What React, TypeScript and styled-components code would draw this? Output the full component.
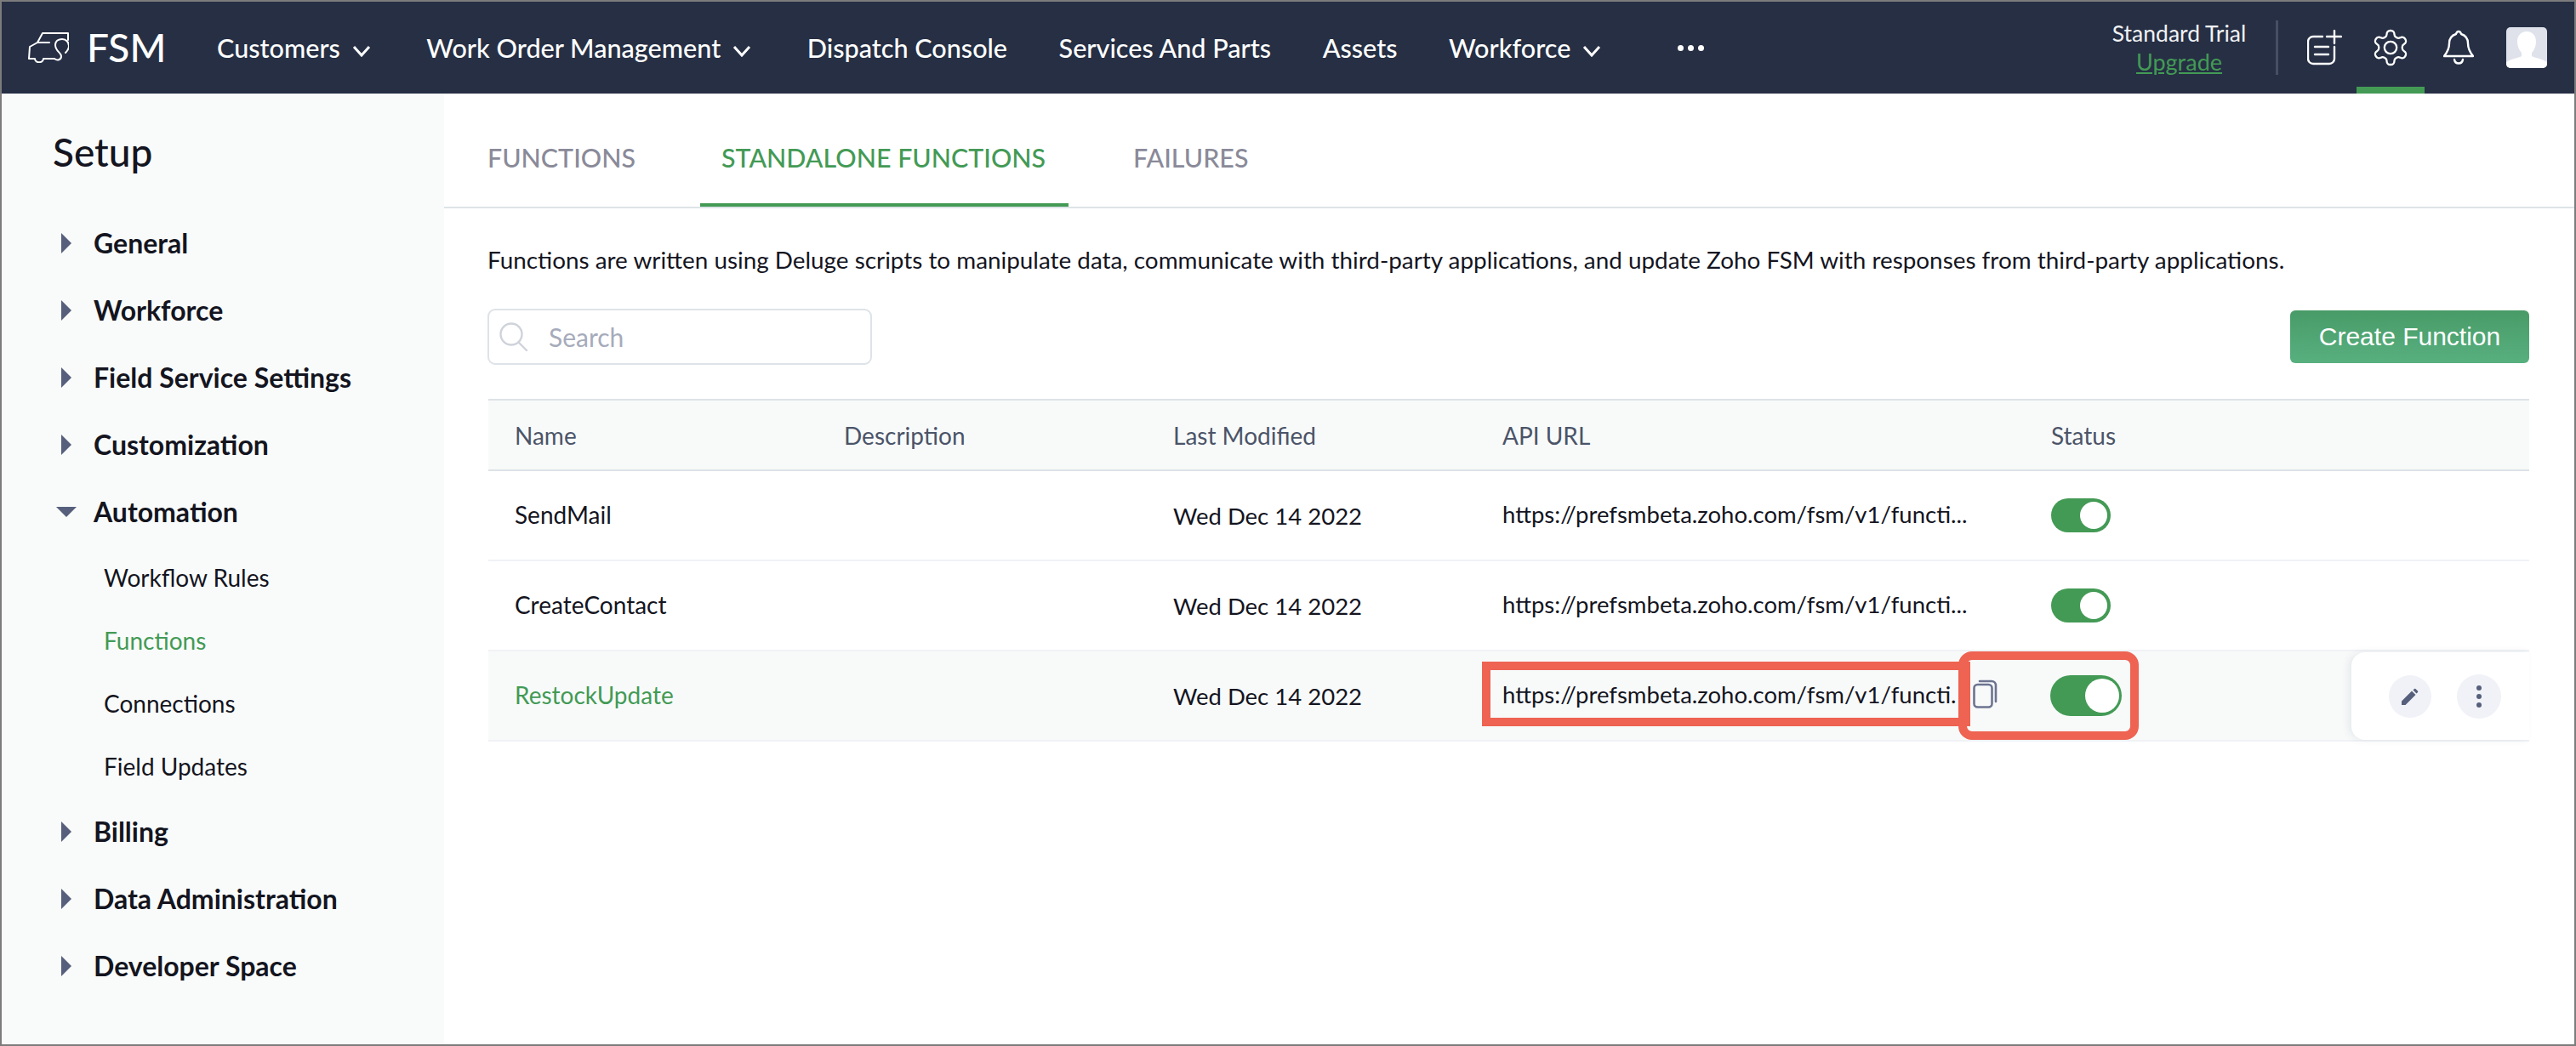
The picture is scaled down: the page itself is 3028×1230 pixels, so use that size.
import React from 'react';
import styled, { createGlobalStyle } from 'styled-components';

const GREEN = '#439a55';
const INK = '#14151f';
const SLATE = '#565f7c';

const GlobalStyle = createGlobalStyle`
  * { box-sizing: border-box; }
  html, body { margin: 0; padding: 0; background: #fff; }
  body { font-family: Lato, "Open Sans", sans-serif; color: ${INK}; }
`;

const Frame = styled.div`
  width: 3028px;
  height: 1230px;
  border: 2px solid #7c7c7c;
  display: flex;
  flex-direction: column;
  overflow: hidden;
  background: #fff;
`;

const TopBar = styled.header`
  height: 108px;
  flex: none;
  background: #262f44;
  display: flex;
  align-items: center;
  color: #fff;
  padding: 0 32px 0 31px;
`;

const Logo = styled.div`
  display: flex;
  align-items: center;
  gap: 21px;
  font-size: 46px;
  font-weight: 500;
  line-height: 1;
  width: 222px;
  flex: none;
`;

const NavList = styled.nav`
  display: flex;
  align-items: center;
  gap: 60.500px;
  flex: 1;
`;

const NavItem = styled.div`
  display: flex;
  align-items: center;
  gap: 14px;
  font-size: 30.6px;
  font-weight: 500;
  white-space: nowrap;
`;

const NavChevron = styled.svg`
  margin: 8px 5px 0 0;
`;

const MoreDots = styled.div`
  display: flex;
  gap: 5px;
  margin-left: 24px;
  span {
    width: 7px;
    height: 7px;
    border-radius: 50%;
    background: #fff;
  }
`;

const Trial = styled.div`
  width: 157px;
  display: flex;
  flex-direction: column;
  align-items: center;
  font-size: 26.5px;
  line-height: 33px;
  margin-right: 35px;
  color: #f1f2f4;
  white-space: nowrap;
`;

const Upgrade = styled.a`
  color: ${GREEN};
  text-decoration: underline;
  font-size: 27px;
`;

const Divider = styled.div`
  width: 3px;
  height: 64px;
  background: #484f62;
  margin-right: 32px;
`;

const IconSlot = styled.div<{ $active?: boolean }>`
  width: ${p => (p.$active ? 80 : 44)}px;
  height: 108px;
  display: flex;
  align-items: center;
  justify-content: center;
  position: relative;
  margin-right: ${p => (p.$active ? 18 : 16)}px;
  ${p => p.$active && `
    &::after {
      content: '';
      position: absolute;
      left: 0;
      right: 0;
      bottom: 0;
      height: 8px;
      background: ${GREEN};
    }
  `}
`;

const BellSlot = styled(IconSlot)`
  margin-right: 34px;
`;

const Avatar = styled.div`
  width: 48px;
  height: 48px;
  border-radius: 5px;
  background: #dfe2eb;
  overflow: hidden;
  flex: none;
`;

const Body = styled.div`
  flex: 1;
  display: flex;
  min-height: 0;
`;

const Sidebar = styled.aside`
  width: 520px;
  flex: none;
  background: #f9fbfa;
  padding: 0 0 0 60px;
`;

const SetupTitle = styled.h1`
  margin: 40px 0 38px;
  font-size: 46px;
  line-height: 58px;
  font-weight: 500;
  color: ${INK};
`;

const Section = styled.div`
  height: 79px;
  display: flex;
  align-items: center;
  font-size: 32px;
  font-weight: 700;
  color: ${INK};
`;

const Caret = styled.span`
  width: 48px;
  display: flex;
  align-items: center;
  padding-left: 10px;
  flex: none;
`;

const OpenCaret = styled.svg`
  margin-left: -6px;
`;

const SubList = styled.div`
  display: flex;
  flex-direction: column;
  padding-left: 60px;
  margin-top: 1px;
`;

const SubItem = styled.div<{ $active?: boolean }>`
  height: 74px;
  display: flex;
  align-items: center;
  font-size: 28px;
  color: ${p => (p.$active ? GREEN : INK)};
`;

const Main = styled.main`
  flex: 1;
  min-width: 0;
  position: relative;
`;

const Tabs = styled.div`
  height: 135px;
  display: flex;
  align-items: stretch;
  gap: 76px;
  padding: 0 0 0 51px;
  border-bottom: 2px solid #dde4e8;
`;

const Tab = styled.div<{ $active?: boolean }>`
  display: flex;
  align-items: center;
  padding: ${p => (p.$active ? '20px 27px 0 25px' : '20px 0 0')};
  font-size: 30.4px;
  font-weight: 500;
  color: ${p => (p.$active ? GREEN : '#8a8a99')};
  border-bottom: 4px solid ${p => (p.$active ? GREEN : 'transparent')};
`;

const Intro = styled.p`
  margin: 43px 0 0 51px;
  font-size: 27.85px;
  line-height: 36px;
  color: ${INK};
`;

const Toolbar = styled.div`
  display: flex;
  justify-content: space-between;
  align-items: center;
  margin: 39px 53px 0 51px;
`;

const SearchBox = styled.div`
  width: 452px;
  height: 66px;
  border: 2px solid #dde3e8;
  border-radius: 9px;
  display: flex;
  align-items: center;
  gap: 24px;
  padding-left: 12px;
  color: #a6abbb;
  font-size: 30px;
`;

const CreateButton = styled.button`
  width: 281px;
  height: 62px;
  border: 0;
  border-radius: 6px;
  background: linear-gradient(180deg, #489b67 0%, #58b07f 100%);
  color: #fff;
  font-family: "Liberation Sans", Arial, sans-serif;
  font-size: 30px;
  padding: 0;
`;

const Table = styled.div`
  margin: 40px 53px 0 52px;
`;

const Grid = styled.div`
  display: grid;
  grid-template-columns: 387px 387px 387px 645px 1fr;
  align-items: center;
  padding-left: 31px;
`;

const HeadRow = styled(Grid)`
  height: 85px;
  background: #f8fafa;
  border-top: 2px solid #dde3e8;
  border-bottom: 2px solid #dde3e8;
  color: #4b5468;
  font-size: 28px;
`;

const Row = styled(Grid)<{ $hover?: boolean }>`
  height: 106px;
  position: relative;
  border-bottom: 2px solid #f0f2f6;
  font-size: 27.5px;
  background: ${p => (p.$hover ? '#f8fafa' : '#fff')};
`;

const NameCell = styled.div<{ $active?: boolean }>`
  color: ${p => (p.$active ? GREEN : INK)};
  font-size: 28px;
  margin-top: -3px;
`;

const UrlCell = styled.div`
  display: flex;
  align-items: center;
  white-space: nowrap;
  margin-top: -3px;
`;

const StatusCell = styled.div`
  display: flex;
`;

const CopyIcon = styled.span`
  position: absolute;
  left: 1745px;
  top: 33px;
  display: flex;
`;

const Toggle = styled.span<{ $big?: boolean }>`
  display: inline-block;
  position: relative;
  margin-left: ${p => (p.$big ? -1 : 0)}px;
  width: ${p => (p.$big ? 84 : 70)}px;
  height: ${p => (p.$big ? 48 : 40)}px;
  border-radius: 24px;
  background: ${GREEN};
  &::after {
    content: '';
    position: absolute;
    top: 4px;
    right: ${p => (p.$big ? 3 : 4)}px;
    width: ${p => (p.$big ? 40 : 32)}px;
    height: ${p => (p.$big ? 40 : 32)}px;
    border-radius: 50%;
    background: #fff;
  }
`;

const ActionCard = styled.div`
  position: absolute;
  right: 0;
  top: 1px;
  bottom: 0;
  width: 209px;
  background: #fff;
  border-radius: 16px 0 0 16px;
  box-shadow: -4px 0 8px rgba(40, 50, 80, 0.08);
  display: flex;
  align-items: center;
  gap: 30px;
  padding-left: 44px;
`;

const RoundButton = styled.span<{ $size: number }>`
  width: ${p => p.$size}px;
  height: ${p => p.$size}px;
  border-radius: 50%;
  background: #f1f2f7;
  display: flex;
  align-items: center;
  justify-content: center;
`;

const Callout = styled.div<{ $left: number; $top: number; $width: number; $height: number; $radius: number }>`
  position: absolute;
  left: ${p => p.$left}px;
  top: ${p => p.$top}px;
  width: ${p => p.$width}px;
  height: ${p => p.$height}px;
  border: 10px solid #ee6352;
  border-radius: ${p => p.$radius}px;
  pointer-events: none;
`;

const Chevron = () => (
  <NavChevron width="22" height="14" viewBox="0 0 22 14" fill="none" stroke="#fff" strokeWidth="3">
    <path d="M2 2l9 10 9-10" />
  </NavChevron>
);

const TruckLogo = () => (
  <svg width="48" height="36" viewBox="0 0 48 36" fill="none" stroke="#fff" strokeWidth="2" strokeLinejoin="round" strokeLinecap="round">
    <path d="M47 9V1H17l-6 11h14" />
    <path d="M11 12l-9 5-1 14h7c0 5.500 10 5.500 10 0h13c3 2.500 8 2 8-3 0-4-7-6-7-13 0-5 4-7 8-7 5 0 8 4 8 8 0 3-2 6-4 8" />
  </svg>
);

const NoteIcon = () => (
  <svg width="41" height="42" viewBox="0 0 41 42" fill="none" stroke="#fff" strokeWidth="2.4" strokeLinecap="round">
    <path d="M18 8H7a6 6 0 0 0-6 6v20a6 6 0 0 0 6 6h19a6 6 0 0 0 6-6V20" />
    <path d="M9 20h16M9 29h16M32 1v15M23 8h17" />
  </svg>
);

const GearIcon = () => (
  <svg width="48" height="48" viewBox="0 0 24 24" fill="none" stroke="#fff" strokeWidth="1.15" strokeLinecap="round" strokeLinejoin="round">
    <path d="M12.22 2h-.44a2 2 0 0 0-2 2v.18a2 2 0 0 1-1 1.730l-.43.25a2 2 0 0 1-2 0l-.15-.08a2 2 0 0 0-2.730.73l-.22.38a2 2 0 0 0 .73 2.730l.15.1a2 2 0 0 1 1 1.720v.51a2 2 0 0 1-1 1.740l-.15.09a2 2 0 0 0-.73 2.730l.22.38a2 2 0 0 0 2.730.73l.15-.08a2 2 0 0 1 2 0l.43.25a2 2 0 0 1 1 1.730V20a2 2 0 0 0 2 2h.44a2 2 0 0 0 2-2v-.18a2 2 0 0 1 1-1.730l.43-.25a2 2 0 0 1 2 0l.15.08a2 2 0 0 0 2.730-.73l.22-.39a2 2 0 0 0-.73-2.730l-.15-.08a2 2 0 0 1-1-1.740v-.5a2 2 0 0 1 1-1.740l.15-.09a2 2 0 0 0 .73-2.730l-.22-.38a2 2 0 0 0-2.730-.73l-.15.08a2 2 0 0 1-2 0l-.43-.25a2 2 0 0 1-1-1.730V4a2 2 0 0 0-2-2z" />
    <circle cx="12" cy="12" r="3.6" />
  </svg>
);

const BellIcon = () => (
  <svg width="36" height="42" viewBox="0 0 36 42" fill="none" stroke="#fff" strokeWidth="2.4" strokeLinejoin="round" strokeLinecap="round">
    <path d="M18 2c-1.500 0-2.500 1-3 3C9 7 7 11 7 16c0 6-2 10-6 15h34c-4-5-6-9-6-15 0-5-2-9-8-11-.5-2-1.500-3-3-3z" />
    <path d="M13 35c1 6 9 6 10 0" />
  </svg>
);

const AvatarFigure = () => (
  <svg width="48" height="48" viewBox="0 0 48 48" fill="#fff">
    <path d="M24 5c7 0 11 5 11 12 0 5-2 10-5 13v4c3 2 12 3 18 7v7H0v-7c6-4 15-5 18-7v-4c-3-3-5-8-5-13 0-7 4-12 11-12z" />
  </svg>
);

const SearchGlyph = () => (
  <svg width="34" height="34" viewBox="0 0 34 34" fill="none" stroke="#cfd3da" strokeWidth="2.4" strokeLinecap="round">
    <circle cx="14" cy="14" r="12.500" />
    <path d="M23 24l9 9" />
  </svg>
);

const CaretGlyph = ({ open }: { open?: boolean }) =>
  open ? (
    <OpenCaret width="24" height="12" viewBox="0 0 24 12" fill={SLATE}>
      <path d="M0 0h24L12 12z" />
    </OpenCaret>
  ) : (
    <svg width="12" height="24" viewBox="0 0 12 24" fill={SLATE}>
      <path d="M0 0l12 12L0 24z" />
    </svg>
  );

const CopyGlyph = () => (
  <svg width="29" height="34" viewBox="0 0 29 34" fill="none" stroke="#6c7490" strokeWidth="2.6">
    <rect x="1.500" y="6" width="21" height="26.500" rx="4" />
    <path d="M8 2h14a5 5 0 0 1 5 5v19" strokeLinecap="round" />
  </svg>
);

const PencilGlyph = () => (
  <svg width="20" height="20" viewBox="0 0 20 20" fill={SLATE}>
    <path d="M0 20v-4.500L12 3.500 16.500 8 4.500 20zM13.500 2.500L15 1a1 1 0 0 1 1.400 0L19 3.600a1 1 0 0 1 0 1.400L17.500 6.500z" />
  </svg>
);

const DotsGlyph = () => (
  <svg width="6" height="26" viewBox="0 0 6 26" fill={SLATE}>
    <circle cx="3" cy="3" r="3" />
    <circle cx="3" cy="13" r="3" />
    <circle cx="3" cy="23" r="3" />
  </svg>
);

const NAV = [
  { label: 'Customers', menu: true },
  { label: 'Work Order Management', menu: true },
  { label: 'Dispatch Console' },
  { label: 'Services And Parts' },
  { label: 'Assets' },
  { label: 'Workforce', menu: true },
];

const SECTIONS_TOP = ['General', 'Workforce', 'Field Service Settings', 'Customization'];
const SECTIONS_BOTTOM = ['Billing', 'Data Administration', 'Developer Space'];
const URL_TEXT = 'https://prefsmbeta.zoho.com/fsm/v1/functi';

const App: React.FC = () => {
  return (
    <>
      <GlobalStyle />
      <Frame>
        <TopBar>
          <Logo>
            <TruckLogo />
            FSM
          </Logo>
          <NavList>
            {NAV.map(item => (
              <NavItem key={item.label}>
                {item.label}
                {item.menu && <Chevron />}
              </NavItem>
            ))}
            <MoreDots>
              <span />
              <span />
              <span />
            </MoreDots>
          </NavList>
          <Trial>
            Standard Trial
            <Upgrade>Upgrade</Upgrade>
          </Trial>
          <Divider />
          <IconSlot>
            <NoteIcon />
          </IconSlot>
          <IconSlot $active>
            <GearIcon />
          </IconSlot>
          <BellSlot>
            <BellIcon />
          </BellSlot>
          <Avatar>
            <AvatarFigure />
          </Avatar>
        </TopBar>
        <Body>
          <Sidebar>
            <SetupTitle>Setup</SetupTitle>
            {SECTIONS_TOP.map(name => (
              <Section key={name}>
                <Caret>
                  <CaretGlyph />
                </Caret>
                {name}
              </Section>
            ))}
            <Section>
              <Caret>
                <CaretGlyph open />
              </Caret>
              Automation
            </Section>
            <SubList>
              <SubItem>Workflow Rules</SubItem>
              <SubItem $active>Functions</SubItem>
              <SubItem>Connections</SubItem>
              <SubItem>Field Updates</SubItem>
            </SubList>
            {SECTIONS_BOTTOM.map(name => (
              <Section key={name}>
                <Caret>
                  <CaretGlyph />
                </Caret>
                {name}
              </Section>
            ))}
          </Sidebar>
          <Main>
            <Tabs>
              <Tab>FUNCTIONS</Tab>
              <Tab $active>STANDALONE FUNCTIONS</Tab>
              <Tab>FAILURES</Tab>
            </Tabs>
            <Intro>
              Functions are written using Deluge scripts to manipulate data, communicate with third-party applications, and update Zoho FSM with responses from third-party applications.
            </Intro>
            <Toolbar>
              <SearchBox>
                <SearchGlyph />
                Search
              </SearchBox>
              <CreateButton>Create Function</CreateButton>
            </Toolbar>
            <Table>
              <HeadRow>
                <div>Name</div>
                <div>Description</div>
                <div>Last Modified</div>
                <div>API URL</div>
                <div>Status</div>
              </HeadRow>
              <Row>
                <NameCell>SendMail</NameCell>
                <div />
                <div>Wed Dec 14 2022</div>
                <UrlCell>{URL_TEXT}...</UrlCell>
                <StatusCell>
                  <Toggle />
                </StatusCell>
              </Row>
              <Row>
                <NameCell>CreateContact</NameCell>
                <div />
                <div>Wed Dec 14 2022</div>
                <UrlCell>{URL_TEXT}...</UrlCell>
                <StatusCell>
                  <Toggle />
                </StatusCell>
              </Row>
              <Row $hover>
                <NameCell $active>RestockUpdate</NameCell>
                <div />
                <div>Wed Dec 14 2022</div>
                <UrlCell>{URL_TEXT}.</UrlCell>
                <StatusCell>
                  <Toggle $big />
                </StatusCell>
                <CopyIcon>
                  <CopyGlyph />
                </CopyIcon>
                <ActionCard>
                  <RoundButton $size={50}>
                    <PencilGlyph />
                  </RoundButton>
                  <RoundButton $size={52}>
                    <DotsGlyph />
                  </RoundButton>
                </ActionCard>
              </Row>
            </Table>
            <Callout $left={1220} $top={668} $width={574} $height={76} $radius={0} />
            <Callout $left={1780} $top={656} $width={212} $height={104} $radius={16} />
          </Main>
        </Body>
      </Frame>
    </>
  );
};

export default App;
